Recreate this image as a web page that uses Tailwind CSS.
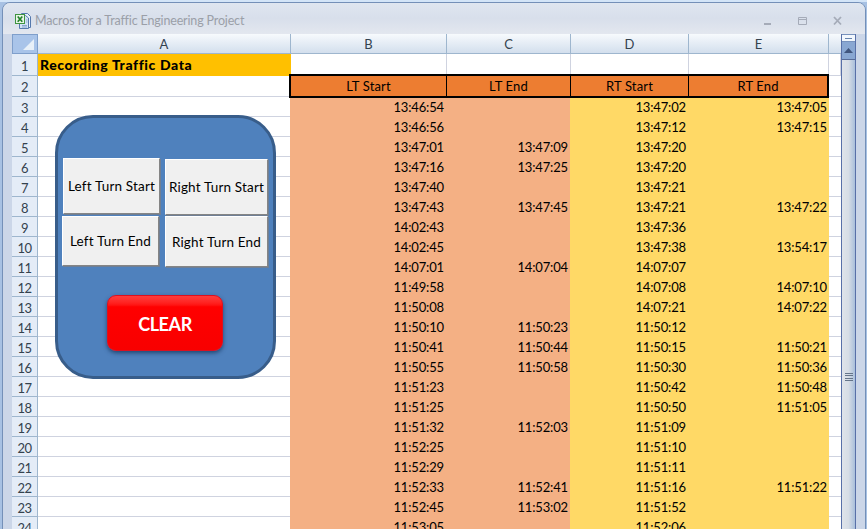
<!DOCTYPE html>
<html lang="en">
<head>
<meta charset="utf-8">
<title>Macros for a Traffic Engineering Project</title>
<script src="https://cdn.jsdelivr.net/npm/@tailwindcss/browser@4"></script>
</head>
<body class="w-[867px] h-[529px] overflow-hidden bg-[#a7c1e3] font-[Lato,sans-serif] text-[13px] text-black">
<div class="relative flex h-[529px] w-[867px] flex-col overflow-hidden border-t-2 border-[#d3e5f8]">
  <div class="ml-[2px] flex h-[560px] w-[864px] shrink-0 flex-col rounded-t-[8px] border border-[#7490b8] bg-[#cbd6e8]">
    <header class="flex h-[31px] shrink-0 items-center rounded-t-[7px] bg-linear-to-b from-[#dfe6f0] via-[#d8dfeb] to-[#e3e7ef] pl-[12px] pt-[5px]">
      <svg class="h-4 w-4 shrink-0" viewBox="0 0 16 16">
        <path d="M6.500 .5H12.500L15.500 3.500V14.500H6.500Z" fill="#e9f1fb" stroke="#5579ad"/>
        <path d="M4.500 2.500H10.500L13.500 5V15.500H4.500Z" fill="#d2e2f5" stroke="#5579ad"/>
        <path d="M7 12.500H12M7 14H12M11 9H12.500M11 7H12.500" stroke="#8aa7d0"/>
        <rect x=".5" y="1.500" width="9" height="9" fill="#e8f4e6" stroke="#3f9440"/>
        <path d="M2.700 3.500L7.300 8.700M7.300 3.500L2.700 8.700" stroke="#23822b" stroke-width="1.700"/>
      </svg>
      <span class="ml-[4px] text-[12.500px] leading-4 tracking-[-0.160px] text-[#9b9fa8]">Macros for a Traffic Engineering Project</span>
      <svg class="ml-auto mr-[20px] h-4 w-[84px]" viewBox="0 0 84 16" fill="none" stroke="#a5abb8">
        <path d="M3 11H10" stroke-width="2"/>
        <path d="M37.500 4.500H45.500V11.500H37.500ZM37 6.500H46"/>
        <path d="M73 4L80 11.500M80 4L73 11.500" stroke-width="1.800"/>
      </svg>
    </header>
    <div class="ml-[9px] flex min-h-0 flex-1">
      <main id="sheet" class="flex w-[829px] shrink-0 flex-col overflow-hidden bg-white"></main>
      <aside class="flex w-[15px] shrink-0 flex-col border-x border-[#5870a8] bg-linear-to-r from-[#dfe4ea] via-[#d6dde6] to-[#a9bfdb]">
        <div class="flex h-[8px] shrink-0 items-center justify-center border-y border-[#7892bd] bg-[#f2f7fd]"><div class="h-px w-[7px] bg-[#6683ad]"></div></div>
        <div class="flex h-[17px] shrink-0 items-center justify-center bg-[#89a7d2]">
          <svg class="h-[5px] w-[9px]" viewBox="0 0 9 5"><path d="M0 5L4.500 0L9 5Z" fill="#40557d"/></svg>
        </div>
        <div class="flex flex-1 justify-center border-t border-[#586c98]">
          <div class="mt-[313px] flex h-[8px] w-[8px] flex-col justify-between">
            <i class="h-px bg-[#65758a]"></i><i class="h-px bg-[#65758a]"></i><i class="h-px bg-[#65758a]"></i><i class="h-px bg-[#65758a]"></i>
          </div>
        </div>
      </aside>
    </div>
  </div>

  <!-- Macro panel floating over the worksheet -->
  <section class="absolute left-[55px] top-[113px] h-[264px] w-[221px] rounded-[38px] border-[3px] border-[#385d8a] bg-[#4f81bd] text-[13.500px] tracking-[0.180px]">
    <button class="absolute left-[5px] top-[40px] h-[56px] w-[97px] whitespace-nowrap border border-t-white border-l-white border-r-[#858585] border-b-[#858585] bg-[#f0f0f0] shadow-[1px_1px_0_#6f7f95]">Left Turn Start</button>
    <button class="absolute left-[107px] top-[41px] h-[56px] w-[103px] whitespace-nowrap border border-t-white border-l-white border-r-[#858585] border-b-[#858585] bg-[#f0f0f0] shadow-[1px_1px_0_#6f7f95]">Right Turn Start</button>
    <button class="absolute left-[4px] top-[98px] h-[50px] w-[97px] whitespace-nowrap border border-t-white border-l-white border-r-[#858585] border-b-[#858585] bg-[#f0f0f0] shadow-[1px_1px_0_#6f7f95]">Left Turn End</button>
    <button class="absolute left-[107px] top-[98px] h-[51px] w-[103px] whitespace-nowrap border border-t-white border-l-white border-r-[#858585] border-b-[#858585] bg-[#f0f0f0] pt-[2px] shadow-[1px_1px_0_#6f7f95]">Right Turn End</button>
    <button class="absolute left-[49px] top-[177px] h-[56px] w-[116px] rounded-[9px] border border-[#dc1020] bg-linear-to-b from-[#ff3b3b] via-[#ff0000] via-20% to-[#f80000] pt-[2px] text-[18px] font-bold tracking-[-0.400px] text-white shadow-[0_2px_4px_#17365dcc]">CLEAR</button>
  </section>
</div>
<script>
const rows = `13:46:54||13:47:02|13:47:05
13:46:56||13:47:12|13:47:15
13:47:01|13:47:09|13:47:20|
13:47:16|13:47:25|13:47:20|
13:47:40||13:47:21|
13:47:43|13:47:45|13:47:21|13:47:22
14:02:43||13:47:36|
14:02:45||13:47:38|13:54:17
14:07:01|14:07:04|14:07:07|
11:49:58||14:07:08|14:07:10
11:50:08||14:07:21|14:07:22
11:50:10|11:50:23|11:50:12|
11:50:41|11:50:44|11:50:15|11:50:21
11:50:55|11:50:58|11:50:30|11:50:36
11:51:23||11:50:42|11:50:48
11:51:25||11:50:50|11:51:05
11:51:32|11:52:03|11:51:09|
11:52:25||11:51:10|
11:52:29||11:51:11|
11:52:33|11:52:41|11:51:16|11:51:22
11:52:45|11:53:02|11:51:52|
11:53:05||11:52:06|`.split('\n').map(r => r.split('|'));
const rowHead = n => `<div class="flex w-[26px] shrink-0 items-center justify-center border-r border-b border-[#9eb6ce] bg-[#e4ecf7] pt-[2px] text-[13px] leading-[18px] tracking-[-0.500px] text-[#34424e]">${n}</div>`;
const head = (w, t) => `<div class="${w} flex shrink-0 items-center justify-center border-r border-b border-[#9eb6ce] bg-linear-to-b from-[#f7fafd] to-[#d3dfed] pt-[3px] text-[13px] text-[#34424e]">${t}</div>`;
const widths = ['w-[156px]', 'w-[124px]', 'w-[118px]', 'w-[140px]'];
let html = `<div class="flex h-[20px] shrink-0"><div class="flex w-[26px] shrink-0 items-end justify-end border border-[#7f9fcb] bg-[#a9c4e9] pr-[3px] pb-[3px]"><svg class="h-[11px] w-[11px]" viewBox="0 0 11 11"><path d="M11 0V11H0Z" fill="#e8f0f8"/></svg></div>`
  + head('w-[253px]', 'A') + head('w-[156px]', 'B') + head('w-[124px]', 'C') + head('w-[118px]', 'D') + head('w-[140px]', 'E') + head('w-[20px]', '') + '</div>';
html += `<div class="flex h-[22px] shrink-0">${rowHead(1)}<div class="w-[253px] shrink-0 bg-[#ffc000] pl-[2px] text-[14px] leading-[21px] font-black tracking-[0.600px]">Recording Traffic Data</div>`
  + [...widths, 'w-[12px]'].map(w => `<div class="${w} shrink-0 border-r border-b border-[#cfd3e0]"></div>`).join('') + '</div>';
const labels = ['LT Start', 'LT End', 'RT Start', 'RT End'];
html += `<div class="flex h-[21px] shrink-0">${rowHead(2)}<div class="w-[251px] shrink-0 border-b border-[#cfd3e0]"></div><div class="z-10 -mt-[2px] flex h-[24px] w-[540px] shrink-0 border-2 border-black bg-[#ed7d31]">`
  + labels.map((t, i) => `<div class="${['w-[156px] border-r', 'w-[124px] border-r', 'w-[118px] border-r', 'w-[138px]'][i]} flex shrink-0 items-center justify-center border-black pt-[2px] tracking-[0.150px]">${t}</div>`).join('')
  + `</div><div class="flex-1 border-b border-[#cfd3e0]"></div></div>`;
rows.forEach((r, i) => {
  html += `<div class="flex h-[20px] shrink-0">${rowHead(i + 3)}<div class="w-[252px] shrink-0 border-b border-[#cfd3e0]"></div>`
    + r.map((t, c) => `<div class="${['w-[157px] pr-[3px]', 'w-[123px] pr-[2px]', 'w-[119px] pr-[3px]', 'w-[140px] pr-[2px]'][c]} ${c < 2 ? 'bg-[#f4b084]' : 'bg-[#ffd966]'} shrink-0 text-right leading-[21px] tracking-[-0.150px]">${t}</div>`).join('')
    + `<div class="flex-1 border-b border-[#cfd3e0]"></div></div>`;
});
document.getElementById('sheet').innerHTML = html;
</script>
</body>
</html>
